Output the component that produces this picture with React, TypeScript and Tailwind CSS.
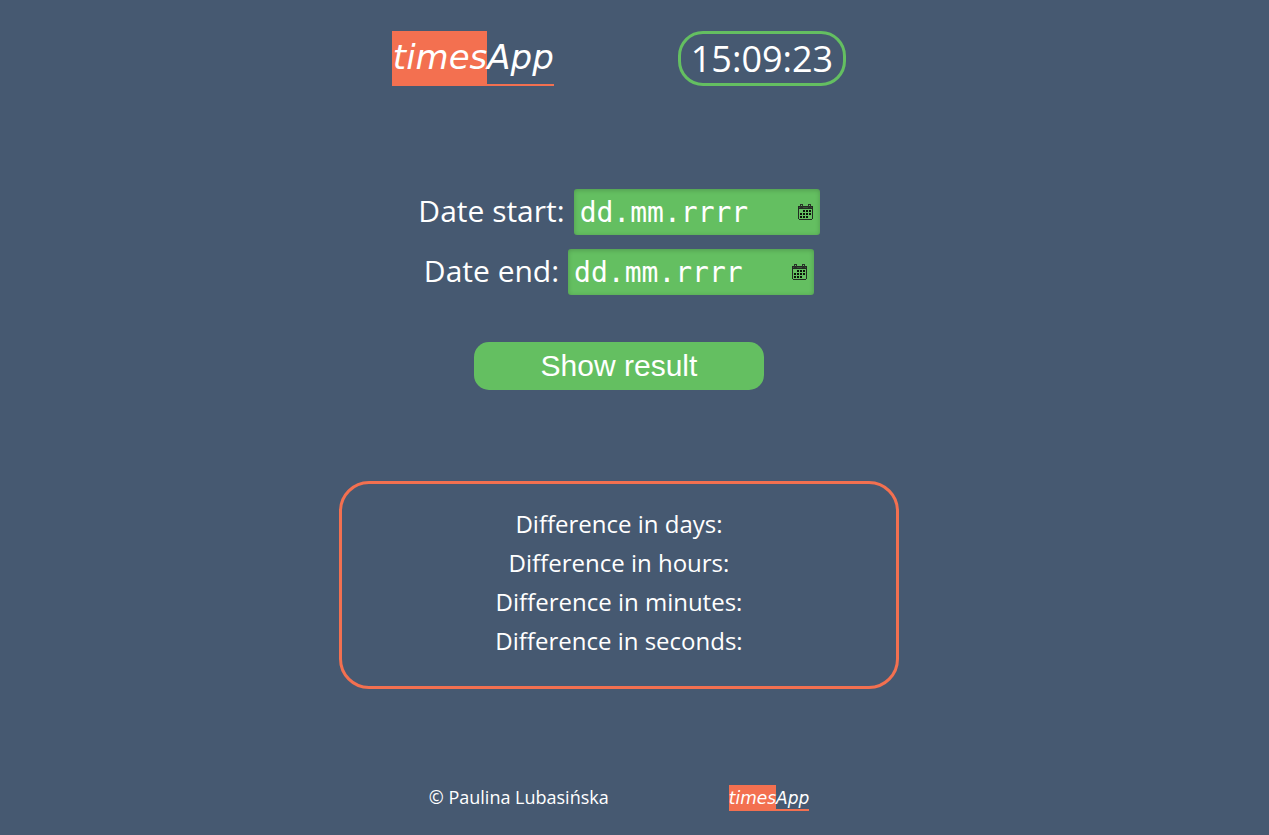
import { useState } from "react";

function CalendarIcon() {
  return (
    <svg width="15" height="16" viewBox="0 0 15 16" shapeRendering="crispEdges" aria-hidden="true">
      <path d="M0 2h15v13h-1v1H1v-1H0zM1 5v10h13V5z" fillRule="evenodd" fill="#222b22" />
      <path d="M1 3h13v1H1z" fill="#3a513a" />
      <path d="M2 0h3v4H2zM3 1v2h1V1zM10 0h3v4h-3zM11 1v2h1V1z" fillRule="evenodd" fill="#2a332a" />
      <path
        d="M5 6h2v2H5zM8 6h2v2H8zM11 6h2v2h-2zM2 9h2v2H2zM5 9h2v2H5zM8 9h2v2H8zM11 9h2v2h-2zM2 12h2v2H2zM5 12h2v2H5zM8 12h2v2H8z"
        fill="#0a120a"
      />
    </svg>
  );
}

function DateField({ id, label }: { id: string; label: string }) {
  const [value, setValue] = useState("");
  return (
    <div className="flex items-center justify-center gap-[9px]">
      <label htmlFor={id} className="pb-[2px] text-[30px] leading-[44px]">
        {label}
      </label>
      <div className="flex h-[46px] w-[246px] items-center rounded-[3px] bg-[#64bf61] pr-[7px] pl-[6px] shadow-[inset_0_1px_5px_rgba(0,0,0,0.2)]">
        <input
          id={id}
          type="text"
          value={value}
          onChange={(e) => setValue(e.target.value)}
          placeholder="dd.mm.rrrr"
          className="h-full min-w-0 flex-1 bg-transparent font-['DejaVu_Sans_Mono',monospace] text-[28px] text-white outline-none placeholder:text-white"
        />
        <button type="button" aria-label={"Open calendar, " + label}>
          <CalendarIcon />
        </button>
      </div>
    </div>
  );
}

const results = ["days", "hours", "minutes", "seconds"];

export default function App() {
  return (
    <div className="flex min-h-screen flex-col items-center bg-[#465971] pt-[31px] pr-[31px] pb-6 font-['Open_Sans',sans-serif] text-white">
      <header className="flex justify-center gap-[124px]">
        <h1 className="flex h-[55px] border-b-2 border-[#f37050] font-['DejaVu_Sans',sans-serif] text-[34px] leading-[53px] italic">
          <span className="bg-[#f37050] pl-px">times</span>
          <span>App</span>
        </h1>
        <time className="flex h-[55px] items-center rounded-[25px] border-[3px] border-[#64bf61] px-[10px] text-[36px]">
          15:09:23
        </time>
      </header>

      <form className="mt-[103px] flex flex-col items-center gap-[14px]" onSubmit={(e) => e.preventDefault()}>
        <DateField id="start" label="Date start:" />
        <DateField id="end" label="Date end:" />
        <button
          type="submit"
          className="mt-[33px] h-12 w-[290px] rounded-[15px] bg-[#64bf61] pb-[2px] font-['Liberation_Sans',sans-serif] text-[30px]"
        >
          Show result
        </button>
      </form>

      <section className="mt-[91px] w-full max-w-[560px] rounded-[30px] border-[3px] border-[#f37050] pt-5 pb-[26px] text-center text-[24px] leading-[39px]">
        {results.map((unit) => (
          <p key={unit}>Difference in {unit}:</p>
        ))}
      </section>

      <footer className="mt-24 flex justify-center gap-[120px] text-[18px] leading-6">
        <p>© Paulina Lubasińska</p>
        <p className="flex h-[26px] border-b-2 border-[#f37050] font-['DejaVu_Sans',sans-serif] text-[17px] leading-[26px] italic">
          <span className="bg-[#f37050]">times</span>
          <span>App</span>
        </p>
      </footer>
    </div>
  );
}
